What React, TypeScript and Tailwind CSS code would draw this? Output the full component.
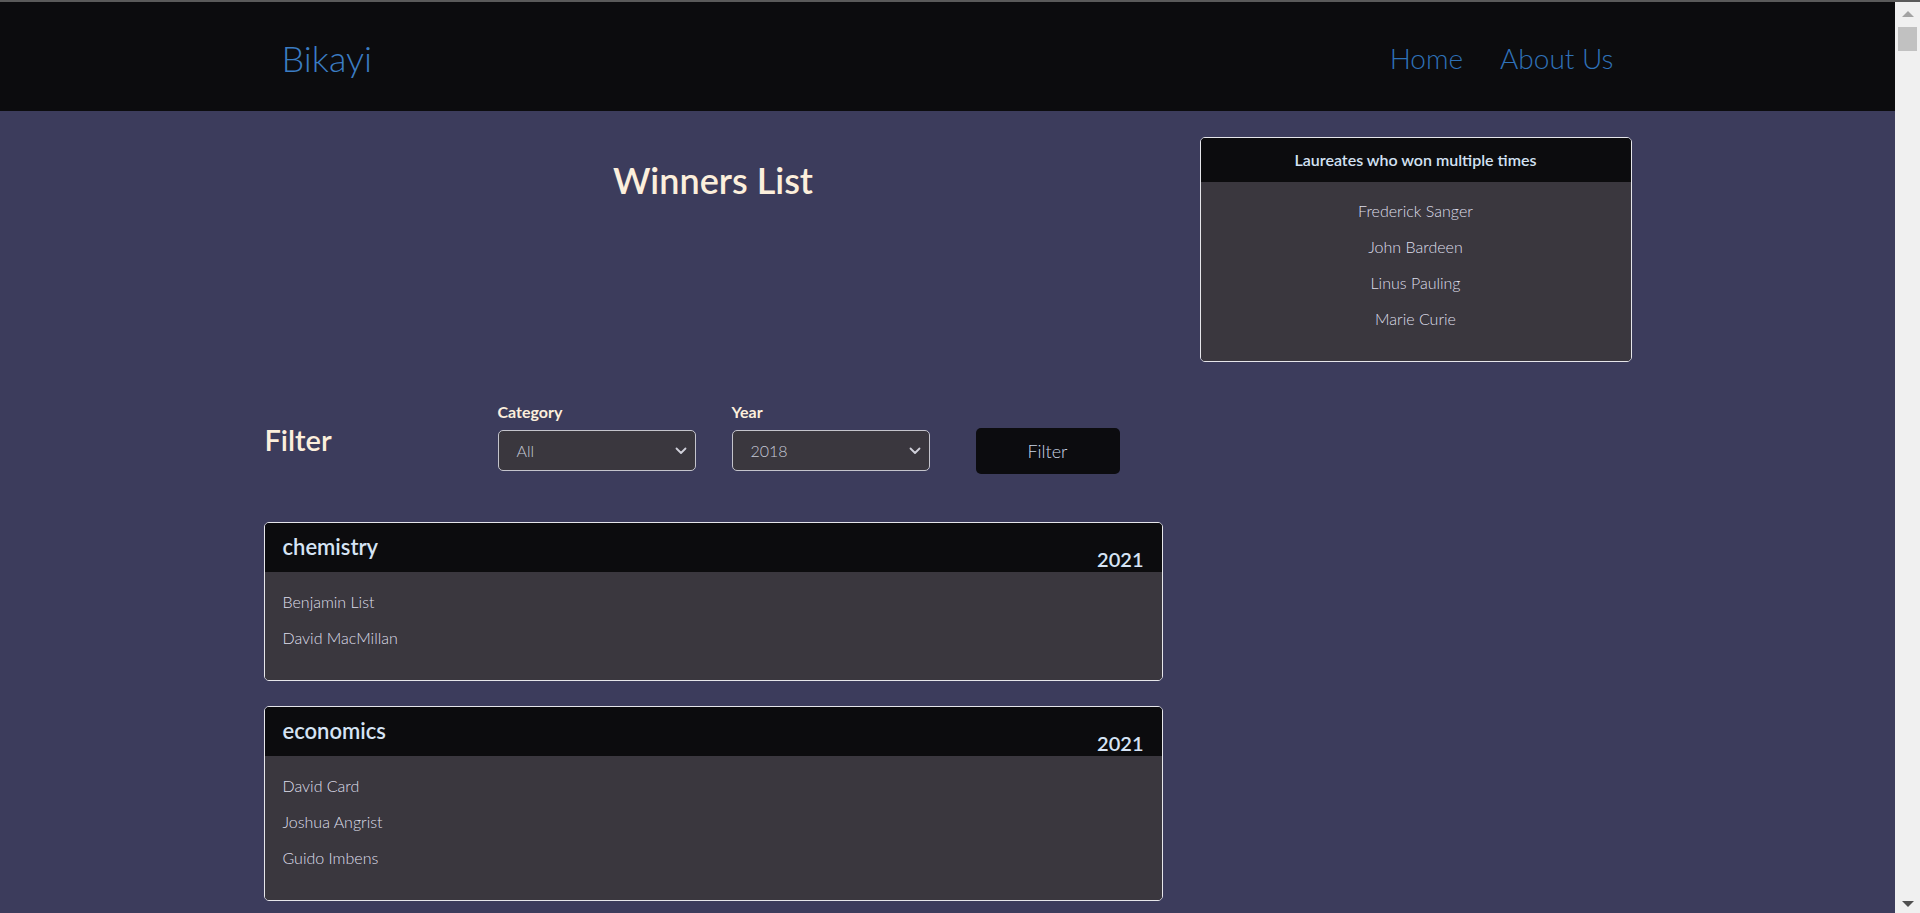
import React from "react";

const FONT = { fontFamily: "Lato, 'Open Sans', 'Noto Sans', sans-serif" } as const;

function Chevron() {
  return (
    <svg width="12" height="8" viewBox="0 0 12 8" className="absolute right-[8px] top-[16px]">
      <path d="M1.5 1.5 L6 6 L10.5 1.5" fill="none" stroke="#d0d0da" strokeWidth="1.8" strokeLinecap="round" strokeLinejoin="round" />
    </svg>
  );
}

function Select({ label, value, width }: { label: string; value: string; width: string }) {
  return (
    <div className={width}>
      <div className="text-[16px] leading-[20px] font-bold text-[#fcefdc] mb-[8px]">{label}</div>
      <div className="relative w-[198px] h-[41px] rounded-[5px] border border-[#c4c4cc] bg-[#3a373e] flex items-center pl-[18px]">
        <span className="text-[16px] font-light text-[#c6cad8] leading-none">{value}</span>
        <Chevron />
      </div>
    </div>
  );
}

function PrizeCard({ category, year, names }: { category: string; year: string; names: string[] }) {
  return (
    <div className="rounded-[5px] border border-[#e6e6ea] overflow-hidden">
      <div className="h-[49px] bg-[#0c0c0e] flex justify-between items-start px-[18px]">
        <div className="mt-[12px] text-[22px] leading-[24px] font-semibold text-[#d6e4f5]">{category}</div>
        <div className="mt-[24px] text-[20px] leading-[24px] font-semibold text-[#d6e4f5]">{year}</div>
      </div>
      <div className="bg-[#3a373e] pt-[12px] pb-[24px] px-[18px]">
        {names.map((n) => (
          <div key={n} className="text-[16px] leading-[36px] font-light text-[#dedeea]">
            {n}
          </div>
        ))}
      </div>
    </div>
  );
}

export default function App() {
  return (
    <div className="w-[1920px] h-[913px] overflow-hidden flex flex-col" style={FONT}>
      <div className="h-[2px] bg-[#5a5a5a] shrink-0" />
      <div className="flex flex-1 min-h-0">
        <div className="flex-1 bg-[#3c3c5c] overflow-hidden">
          <nav className="h-[109px] bg-[#0c0c0e] flex items-center">
            <div className="w-[1332px] mx-auto flex justify-between items-center pt-[2px]">
              <span className="text-[36px] leading-[46px] font-light text-[#3b7dc3]">Bikayi</span>
              <div className="flex items-center gap-[37px]">
                <span className="text-[28px] leading-[40px] font-light text-[#2f71b8]">Home</span>
                <span className="text-[28px] leading-[40px] font-light text-[#2f71b8]">About Us</span>
              </div>
            </div>
          </nav>

          <div className="w-[1368px] mx-auto flex gap-[37px]">
            <div className="w-[899px]">
              <h1 className="mt-[47px] text-center text-[36px] leading-[44px] font-semibold text-[#fcefdc]">
                Winners List
              </h1>

              <div className="mt-[200px] flex items-start">
                <div className="w-[234px] pt-[20px]">
                  <h2 className="text-[29px] leading-[36px] font-semibold text-[#fcefdc] pl-[1px]">Filter</h2>
                </div>
                <Select label="Category" value="All" width="w-[234px]" />
                <Select label="Year" value="2018" width="w-[244px]" />
                <button className="mt-[26px] w-[144px] h-[46px] rounded-[5px] bg-[#0c0c0f] text-[18px] font-light text-[#cbd7e7]">
                  Filter
                </button>
              </div>

              <div className="mt-[48px] flex flex-col gap-[25px]">
                <PrizeCard category="chemistry" year="2021" names={["Benjamin List", "David MacMillan"]} />
                <PrizeCard category="economics" year="2021" names={["David Card", "Joshua Angrist", "Guido Imbens"]} />
              </div>
            </div>

            <div className="w-[432px]">
              <div className="mt-[26px] rounded-[5px] border border-[#e6e6ea] overflow-hidden">
                <div className="h-[44px] bg-[#0c0c0e] flex items-center justify-center">
                  <span className="text-[16px] font-semibold text-[#d3e1f3]">Laureates who won multiple times</span>
                </div>
                <div className="bg-[#3a373e] pt-[11px] pb-[24px] text-center">
                  {["Frederick Sanger", "John Bardeen", "Linus Pauling", "Marie Curie"].map((n) => (
                    <div key={n} className="text-[16px] leading-[36px] font-light text-[#dedeea]">
                      {n}
                    </div>
                  ))}
                </div>
              </div>
            </div>
          </div>
        </div>

        <div className="w-[25px] bg-[#f0f0f0] flex flex-col items-center shrink-0">
          <svg width="12" height="7" viewBox="0 0 12 7" className="mt-[8px]">
            <path d="M0 7 L6 1 L12 7 Z" fill="#a3a3a3" />
          </svg>
          <div className="mt-[10px] w-[19px] h-[24px] bg-[#c1c1c1]" />
          <div className="flex-1" />
          <svg width="12" height="7" viewBox="0 0 12 7" className="mb-[5px]">
            <path d="M0 0 L12 0 L6 6 Z" fill="#505050" />
          </svg>
        </div>
      </div>
    </div>
  );
}
